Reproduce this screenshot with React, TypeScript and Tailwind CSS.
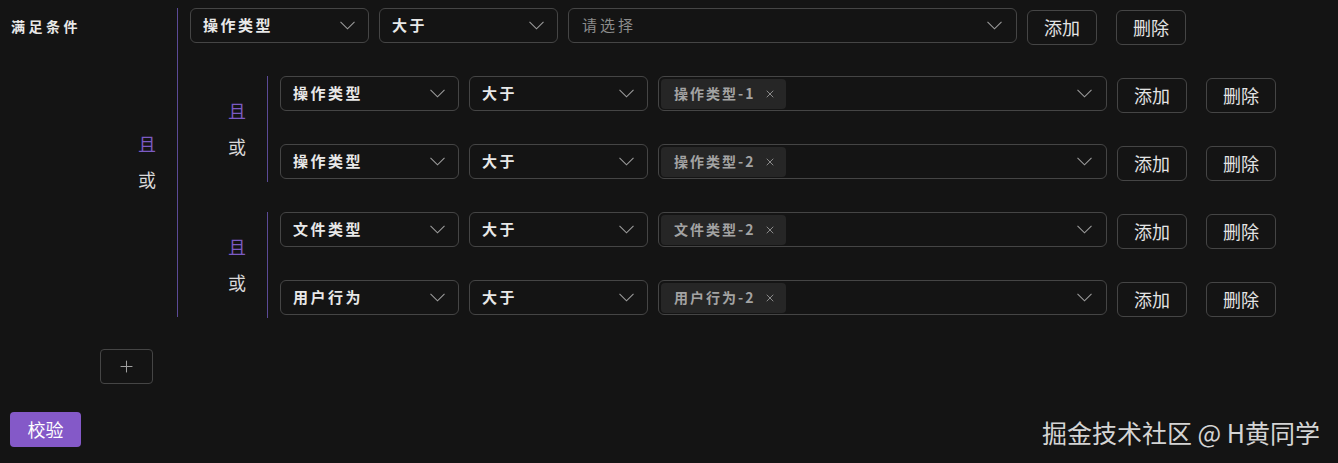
import { X, Plus } from "lucide-react";

type Cond = { field: string; op: string; values: string[] };

const font = { fontFamily: '"Noto Sans CJK SC", "Noto Sans", sans-serif' };

function Chevron() {
  return (
    <svg width="15" height="9" viewBox="0 0 15 9" fill="none" className="shrink-0">
      <polyline points="0.5,0.8 7.5,7.8 14.5,0.8" stroke="#9a9a9a" strokeWidth="1.1" />
    </svg>
  );
}

function Select({ value }: { value: string }) {
  return (
    <div className="flex h-[35px] w-[179px] shrink-0 items-center justify-between rounded-[6px] border border-[#454545] bg-[#141414] pl-[12px] pr-[13px]">
      <span className="text-[15px] font-bold tracking-[2.5px] text-[#e8e8e8]">{value}</span>
      <Chevron />
    </div>
  );
}

function MultiSelect({ values }: { values: string[] }) {
  return (
    <div className="flex h-[35px] w-[449px] shrink-0 items-center justify-between rounded-[6px] border border-[#454545] bg-[#141414] pl-[2px] pr-[14px]">
      {values.length === 0 ? (
        <span className="pl-[11px] text-[15px] tracking-[3px] text-[#8c8c8c]">请选择</span>
      ) : (
        <div className="flex gap-1">
          {values.map((v) => (
            <span
              key={v}
              className="flex h-[30px] items-center rounded-[4px] bg-[#262626] pl-[13px] pr-[10px] text-[14px] font-bold tracking-[2px] text-[#a3a3a3]"
            >
              {v}
              <X size={12} strokeWidth={1.6} className="ml-[9px] text-[#a3a3a3]" />
            </span>
          ))}
        </div>
      )}
      <Chevron />
    </div>
  );
}

function Btn({ label }: { label: string }) {
  return (
    <button className="mt-[2px] flex h-[35px] w-[70px] shrink-0 items-center justify-center rounded-[6px] border border-[#454545] bg-[#141414] text-[18px] text-[#e3e3e3]">
      {label}
    </button>
  );
}

function Row({ c }: { c: Cond }) {
  return (
    <div className="flex h-[35px] items-start">
      <Select value={c.field} />
      <div className="w-[10px]" />
      <Select value={c.op} />
      <div className="w-[10px]" />
      <MultiSelect values={c.values} />
      <div className="w-[10px]" />
      <Btn label="添加" />
      <div className="w-[19px]" />
      <Btn label="删除" />
    </div>
  );
}

function Logic() {
  return (
    <div className="flex flex-col items-center gap-[14px] text-[18px] leading-[22px]">
      <span className="text-[#7b5bc4]">且</span>
      <span className="text-[#d9d9d9]">或</span>
    </div>
  );
}

function Group({ rows }: { rows: Cond[] }) {
  return (
    <div className="flex">
      <div className="flex w-[89px] shrink-0 items-center justify-end pr-[21px]">
        <Logic />
      </div>
      <div className="-mb-[3px] flex flex-col gap-[33px] border-l border-[#5b4a96] pb-[3px] pl-[12px]">
        {rows.map((r, i) => (
          <Row key={i} c={r} />
        ))}
      </div>
    </div>
  );
}

export default function App() {
  const top: Cond = { field: "操作类型", op: "大于", values: [] };
  const g1: Cond[] = [
    { field: "操作类型", op: "大于", values: ["操作类型-1"] },
    { field: "操作类型", op: "大于", values: ["操作类型-2"] },
  ];
  const g2: Cond[] = [
    { field: "文件类型", op: "大于", values: ["文件类型-2"] },
    { field: "用户行为", op: "大于", values: ["用户行为-2"] },
  ];

  return (
    <div className="relative h-[463px] w-[1338px] overflow-hidden bg-[#141414] text-[#e8e8e8]" style={font}>
      <div className="flex pt-[8px]">
        <div className="relative flex w-[177px] shrink-0 items-center justify-end pb-[3px] pr-[21px]">
          <span className="absolute left-[11px] top-[8px] text-[14px] font-bold tracking-[3.5px] text-[#e8e8e8]">
            满足条件
          </span>
          <Logic />
        </div>
        <div className="flex flex-col gap-[33px] border-l border-[#5b4a96] pb-[2px]">
          <div className="pl-[12px]">
            <Row c={top} />
          </div>
          <Group rows={g1} />
          <Group rows={g2} />
        </div>
      </div>

      <button className="ml-[100px] mt-[32px] flex h-[35px] w-[53px] items-center justify-center rounded-[4px] border border-[#454545] bg-[#141414]">
        <Plus size={19} strokeWidth={1.3} className="text-[#a0a0a0]" />
      </button>

      <button className="ml-[10px] mt-[28px] flex h-[35px] w-[71px] items-center justify-center rounded-[4px] bg-[#8459c8] text-[18px] text-white">
        校验
      </button>

      <div className="absolute left-[1042px] top-[414px] text-[25px] leading-[36px] text-[#d4d4d4]">
        掘金技术社区 @ H黄同学
      </div>
    </div>
  );
}
